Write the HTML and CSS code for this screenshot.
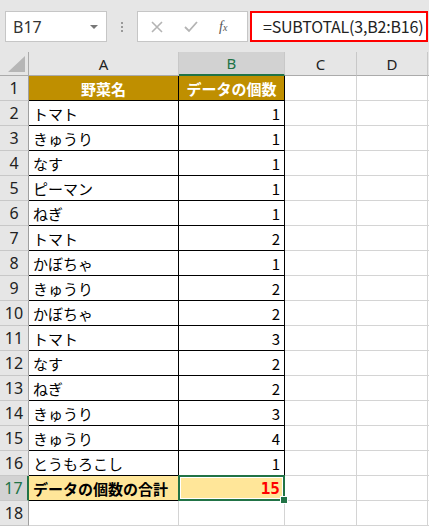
FILE: index.html
```html
<!DOCTYPE html>
<html lang="ja">
<head>
<meta charset="utf-8">
<link rel="stylesheet" href="styles.css">
</head>
<body>
<div class="toolbar">
  <div class="namebox"><span class="name">B17</span><span class="caret"></span></div>
  <div class="dots"><span></span><span></span><span></span></div>
  <div class="fbtns">
    <svg class="ico" width="14" height="14" viewBox="0 0 14 14"><path d="M2 2 L12 12 M12 2 L2 12" stroke="#b4b4b4" stroke-width="1.6" fill="none"/></svg>
    <svg class="ico" width="16" height="14" viewBox="0 0 16 14"><path d="M2 7 L6 11 L14 2" stroke="#b4b4b4" stroke-width="1.8" fill="none"/></svg>
    <span class="fx">f<span class="fxx">x</span></span>
  </div>
  <div class="formula">=SUBTOTAL(3,B2:B16)</div>
</div>
<div class="sheet">
  <div class="corner"><span class="tri"></span></div>
  <div class="ch">A</div>
  <div class="ch sel">B</div>
  <div class="ch">C</div>
  <div class="ch">D</div>
  <div class="ch last"></div>

  <div class="rh">1</div><div class="c hd t">野菜名</div><div class="c hd t">データの個数</div><div class="c"></div><div class="c"></div><div class="c e"></div>
  <div class="rh">2</div><div class="c t l">トマト</div><div class="c t r">1</div><div class="c"></div><div class="c"></div><div class="c e"></div>
  <div class="rh">3</div><div class="c t l">きゅうり</div><div class="c t r">1</div><div class="c"></div><div class="c"></div><div class="c e"></div>
  <div class="rh">4</div><div class="c t l">なす</div><div class="c t r">1</div><div class="c"></div><div class="c"></div><div class="c e"></div>
  <div class="rh">5</div><div class="c t l">ピーマン</div><div class="c t r">1</div><div class="c"></div><div class="c"></div><div class="c e"></div>
  <div class="rh">6</div><div class="c t l">ねぎ</div><div class="c t r">1</div><div class="c"></div><div class="c"></div><div class="c e"></div>
  <div class="rh">7</div><div class="c t l">トマト</div><div class="c t r">2</div><div class="c"></div><div class="c"></div><div class="c e"></div>
  <div class="rh">8</div><div class="c t l">かぼちゃ</div><div class="c t r">1</div><div class="c"></div><div class="c"></div><div class="c e"></div>
  <div class="rh">9</div><div class="c t l">きゅうり</div><div class="c t r">2</div><div class="c"></div><div class="c"></div><div class="c e"></div>
  <div class="rh">10</div><div class="c t l">かぼちゃ</div><div class="c t r">2</div><div class="c"></div><div class="c"></div><div class="c e"></div>
  <div class="rh">11</div><div class="c t l">トマト</div><div class="c t r">3</div><div class="c"></div><div class="c"></div><div class="c e"></div>
  <div class="rh">12</div><div class="c t l">なす</div><div class="c t r">2</div><div class="c"></div><div class="c"></div><div class="c e"></div>
  <div class="rh">13</div><div class="c t l">ねぎ</div><div class="c t r">2</div><div class="c"></div><div class="c"></div><div class="c e"></div>
  <div class="rh">14</div><div class="c t l">きゅうり</div><div class="c t r">3</div><div class="c"></div><div class="c"></div><div class="c e"></div>
  <div class="rh">15</div><div class="c t l">きゅうり</div><div class="c t r">4</div><div class="c"></div><div class="c"></div><div class="c e"></div>
  <div class="rh">16</div><div class="c t l">とうもろこし</div><div class="c t r">1</div><div class="c"></div><div class="c"></div><div class="c e"></div>
  <div class="rh selr">17</div><div class="c t l tot">データの個数の合計</div><div class="c t r tot red active">15</div><div class="c"></div><div class="c"></div><div class="c e"></div>
  <div class="rh">18</div><div class="c"></div><div class="c"></div><div class="c"></div><div class="c"></div><div class="c e"></div>
</div>
</body>
</html>
```
FILE: styles.css
```css
* { box-sizing: border-box; }
html, body { margin: 0; padding: 0; }
body {
  width: 429px;
  height: 527px;
  overflow: hidden;
  background: #fff;
  font-family: "Noto Sans CJK JP", "Noto Sans", sans-serif;
}
.toolbar {
  height: 52px;
  background: #e6e6e6;
  display: flex;
  align-items: flex-start;
  padding-top: 11px;
  padding-left: 5px;
}
.namebox {
  width: 102px;
  height: 31px;
  background: #fff;
  border: 1px solid #c6c6c6;
  display: flex;
  align-items: center;
  justify-content: space-between;
  padding: 0 8px 0 7px;
}
.name { font-size: 16px; color: #333; font-family: "Noto Sans", sans-serif; }
.caret {
  width: 0; height: 0;
  border-left: 4px solid transparent;
  border-right: 4px solid transparent;
  border-top: 4px solid #777;
}
.dots {
  width: 30px;
  height: 31px;
  display: flex;
  flex-direction: column;
  align-items: center;
  justify-content: center;
  gap: 2px;
}
.dots span { width: 2px; height: 2px; background: #999; }
.fbtns {
  width: 111px;
  height: 31px;
  background: #fff;
  border: 1px solid #c6c6c6;
  display: flex;
  align-items: center;
  padding-left: 12px;
  gap: 19px;
}
.fx { font-family: "Liberation Serif", serif; font-style: italic; font-size: 14px; color: #555; margin-left: 1px; }
.fxx { font-size: 10px; }
.formula {
  margin-left: 2px;
  width: 178px;
  height: 31px;
  background: #fff;
  border: 2px solid #ff0000;
  font-size: 16px;
  line-height: 27px;
  padding-left: 11px;
  color: #222;
  white-space: nowrap;
  letter-spacing: -0.2px;
}
.sheet {
  display: grid;
  grid-template-columns: 29px 150px 106px 72px 71px 1fr;
  grid-template-rows: 24px repeat(18, 25px);
}
.corner {
  background: #e6e6e6;
  border-right: 1px solid #ababab;
  border-bottom: 1px solid #ababab;
  position: relative;
}
.tri {
  position: absolute;
  right: 3px;
  bottom: 3px;
  width: 0; height: 0;
  border-left: 17px solid transparent;
  border-bottom: 16px solid #b6b6b6;
}
.ch {
  background: #e6e6e6;
  border-right: 1px solid #c8c8c8;
  border-bottom: 1px solid #ababab;
  display: flex;
  align-items: center;
  justify-content: center;
  font-size: 15px;
  color: #222;
  font-family: "Noto Sans", sans-serif;
}
.ch.sel {
  background: #d2d2d2;
  color: #217346;
  border-bottom: 2px solid #217346;
}
.ch.last { border-right: none; }
.rh {
  background: #e6e6e6;
  border-right: 1px solid #9f9f9f;
  border-bottom: 1px solid #c8c8c8;
  display: flex;
  align-items: center;
  justify-content: center;
  font-size: 16px;
  color: #222;
  font-family: "Noto Sans", sans-serif;
}
.rh.selr {
  background: #d2d2d2;
  color: #217346;
  border-right: 2px solid #217346;
}
.c {
  border-right: 1px solid #d4d4d4;
  border-bottom: 1px solid #d4d4d4;
  display: flex;
  align-items: center;
  font-size: 15px;
  color: #000;
  white-space: nowrap;
  overflow: hidden;
}
.c.e { border-right: none; }
.c.t { border-right-color: #000; border-bottom-color: #000; }
.c.hd {
  background: #bf8f00;
  color: #fff;
  font-weight: bold;
  justify-content: center;
}
.c.l { padding-left: 4px; }
.c.r { justify-content: flex-end; padding-right: 4px; }
.c.tot { background: #ffe699; font-weight: bold; }
.c.red { color: #ff0000; font-family: "DejaVu Sans Mono", monospace; font-size: 16px; }
.c.active { position: relative; overflow: visible; }
.c.active::after {
  content: "";
  position: absolute;
  left: -1px; top: -1px; right: -1px; bottom: -1px;
  border: 2px solid #217346;
  box-shadow: inset 0 0 0 1px #fff;
}
.c.active::before {
  content: "";
  position: absolute;
  right: -4px;
  bottom: -4px;
  width: 6px;
  height: 6px;
  background: #217346;
  border: 1px solid #fff;
  z-index: 2;
}
```
